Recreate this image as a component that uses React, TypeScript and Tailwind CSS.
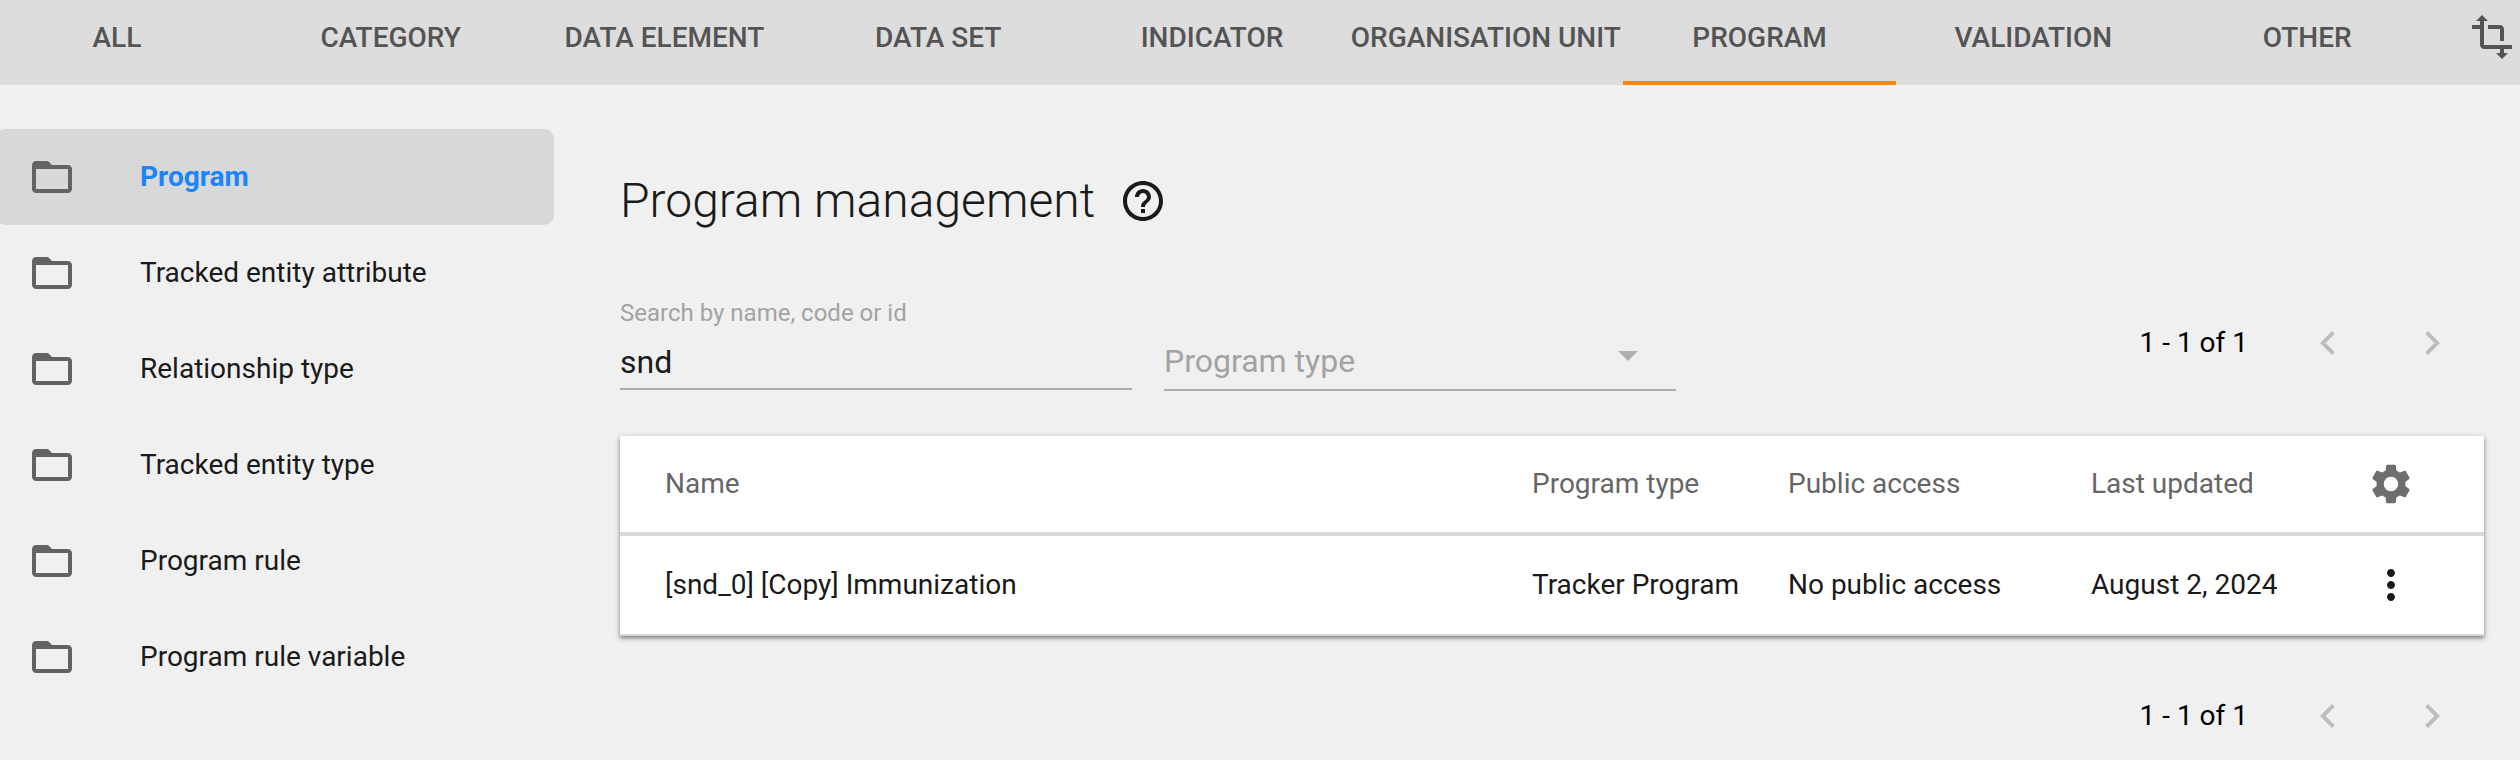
import { useState } from 'react';
import {
  MdArrowDropDown,
  MdChevronLeft,
  MdChevronRight,
  MdFolderOpen,
  MdHelpOutline,
  MdMoreVert,
  MdSettings,
  MdTransform,
} from 'react-icons/md';

const tabs = [
  'ALL',
  'CATEGORY',
  'DATA ELEMENT',
  'DATA SET',
  'INDICATOR',
  'ORGANISATION UNIT',
  'PROGRAM',
  'VALIDATION',
  'OTHER',
];

const sections = [
  'Program',
  'Tracked entity attribute',
  'Relationship type',
  'Tracked entity type',
  'Program rule',
  'Program rule variable',
];

const rows = [
  {
    name: '[snd_0] [Copy] Immunization',
    type: 'Tracker Program',
    access: 'No public access',
    updated: 'August 2, 2024',
  },
];

const headCell = 'h-[100px] border-b-4 border-[#d8d8d8] font-normal whitespace-nowrap';
const bodyCell = 'h-[100px] border-b-2 border-[#d8d8d8] whitespace-nowrap';

function TopBar() {
  return (
    <header className="flex h-[85px] overflow-hidden bg-[#dddddd] text-[#545454]">
      <nav className="-ml-5 flex min-w-0 flex-1">
        {tabs.map((tab) => (
          <a
            key={tab}
            href="#"
            className={`flex min-w-0 flex-1 basis-0 items-center justify-center border-b-4 pb-[5px] font-medium whitespace-nowrap ${
              tab === 'PROGRAM' ? 'border-[#ff860d]' : 'border-transparent'
            }`}
          >
            {tab}
          </a>
        ))}
      </nav>
      <button type="button" aria-label="Toggle width" className="flex h-[74px] w-[76px] shrink-0 items-center pl-6">
        <MdTransform className="size-12" />
      </button>
    </header>
  );
}

function Sidebar() {
  return (
    <nav className="w-[554px] shrink-0 overflow-hidden pt-11">
      <ul className="-ml-1">
        {sections.map((section, i) => (
          <li key={section}>
            <a
              href="#"
              className={`flex h-24 items-center gap-16 rounded-[10px] pl-8 ${
                i === 0 ? 'bg-[#d8d8d8] font-bold text-[#1d85f7]' : ''
              }`}
            >
              <MdFolderOpen className="size-12 shrink-0 text-[#636363]" />
              {section}
            </a>
          </li>
        ))}
      </ul>
    </nav>
  );
}

function Pagination() {
  return (
    <div className="flex h-12 items-center text-black">
      <span className="mr-14">1 - 1 of 1</span>
      <div className="mr-7 flex gap-14 text-[#bdbdbd]">
        <button type="button" aria-label="Previous page">
          <MdChevronLeft className="size-12" />
        </button>
        <button type="button" aria-label="Next page">
          <MdChevronRight className="size-12" />
        </button>
      </div>
    </div>
  );
}

function Filters() {
  const [query, setQuery] = useState('snd');
  return (
    <div className="mt-16 flex items-start">
      <div className="w-[512px]">
        <label htmlFor="search" className="block text-2xl leading-8 text-[#a3a3a3]">
          Search by name, code or id
        </label>
        <input
          id="search"
          value={query}
          onChange={(e) => setQuery(e.target.value)}
          className="mt-1.5 block h-[55px] w-full border-b-2 border-[#adadad] bg-transparent text-[32px] outline-none"
        />
      </div>
      <div className="relative mt-9 ml-8 w-[512px]">
        <select
          aria-label="Program type"
          className="block h-[58px] w-full appearance-none border-b-2 border-[#adadad] bg-transparent text-[32px] text-[#a3a3a3] outline-none"
        >
          <option>Program type</option>
        </select>
        <MdArrowDropDown className="pointer-events-none absolute -top-0.5 right-6 size-12 text-[#b0b0b0]" />
      </div>
      <div className="mt-[22px] ml-auto">
        <Pagination />
      </div>
    </div>
  );
}

function ProgramTable() {
  return (
    <table className="mt-[45px] w-full table-fixed border-separate border-spacing-0 bg-white text-left shadow-[0_2px_6px_rgba(0,0,0,0.3),0_2px_3px_rgba(0,0,0,0.25)]">
      <colgroup>
        <col />
        <col className="w-[256px]" />
        <col className="w-[303px]" />
        <col className="w-[207px]" />
        <col className="w-[186px]" />
      </colgroup>
      <thead className="text-[#666666]">
        <tr>
          <th className={`${headCell} pl-[45px]`}>Name</th>
          <th className={headCell}>Program type</th>
          <th className={headCell}>Public access</th>
          <th className={headCell}>Last updated</th>
          <th className={headCell}>
            <button type="button" aria-label="Configure columns" className="mx-auto block">
              <MdSettings className="size-12 text-[#6e6e6e]" />
            </button>
          </th>
        </tr>
      </thead>
      <tbody>
        {rows.map((row) => (
          <tr key={row.name}>
            <td className={`${bodyCell} pl-[45px]`}>{row.name}</td>
            <td className={bodyCell}>{row.type}</td>
            <td className={bodyCell}>{row.access}</td>
            <td className={bodyCell}>{row.updated}</td>
            <td className={bodyCell}>
              <button type="button" aria-label="Actions" className="mx-auto block">
                <MdMoreVert className="size-12" />
              </button>
            </td>
          </tr>
        ))}
      </tbody>
    </table>
  );
}

export default function App() {
  return (
    <div className="min-h-screen bg-[#f0f0f0] font-[Roboto,sans-serif] text-[28px] leading-9 text-[#1a1a1a]">
      <TopBar />
      <div className="flex">
        <Sidebar />
        <main className="ml-[66px] min-w-0 flex-1 pt-[84px] pr-9">
          <div className="flex items-center gap-6">
            <h1 className="text-5xl leading-[64px] font-light">Program management</h1>
            <a href="#" aria-label="Help">
              <MdHelpOutline className="size-12" />
            </a>
          </div>
          <Filters />
          <ProgramTable />
          <div className="mt-14 flex justify-end">
            <Pagination />
          </div>
        </main>
      </div>
    </div>
  );
}
